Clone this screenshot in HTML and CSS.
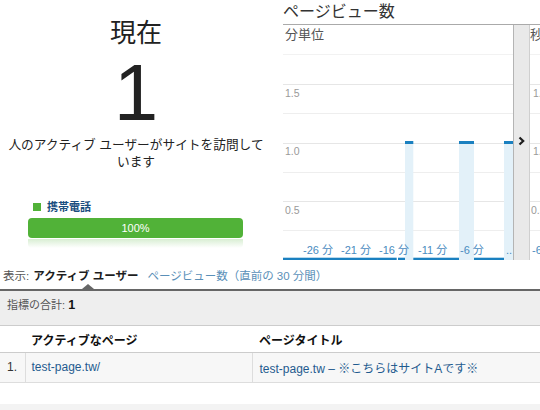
FILE: index.html
```html
<!DOCTYPE html>
<html lang="ja">
<head>
<meta charset="utf-8">
<title>リアルタイム</title>
<link rel="stylesheet" href="styles.css">
</head>
<body>
<div class="top">
  <div class="now">
    <div class="now-title">現在</div>
    <div class="now-count">1</div>
    <div class="now-desc">人のアクティブ ユーザーがサイトを訪問して<br>います</div>
    <div class="device">
      <div class="legend"><span class="swatch"></span>携帯電話</div>
      <div class="bar">100%</div>
      <div class="bar-reflect"></div>
    </div>
  </div>
  <div class="pv">
    <div class="pv-title">ページビュー数</div>
    <div class="pv-chart">
      <div class="plot plot-min">
        <div class="plot-label">分単位</div>
        <svg class="plot-svg" width="230" height="215" viewBox="0 0 230 215">
          <g stroke-width="1">
            <line x1="0" y1="9.5" x2="230" y2="9.5" stroke="#f2f2f2"/>
            <line x1="0" y1="39.5" x2="230" y2="39.5" stroke="#e6e6e6"/>
            <line x1="0" y1="68.5" x2="230" y2="68.5" stroke="#eeeeee"/>
            <line x1="0" y1="98.5" x2="230" y2="98.5" stroke="#e6e6e6"/>
            <line x1="0" y1="127.5" x2="230" y2="127.5" stroke="#eeeeee"/>
            <line x1="0" y1="156.5" x2="230" y2="156.5" stroke="#e6e6e6"/>
            <line x1="0" y1="185.5" x2="230" y2="185.5" stroke="#eeeeee"/>
          </g>
          <g fill="#e3f1f9">
            <rect x="122" y="99" width="8.3" height="116"/>
            <rect x="176" y="99" width="15" height="116"/>
            <rect x="221" y="99" width="9" height="116"/>
          </g>
          <g fill="#1a80c0">
            <rect x="122" y="96" width="8.3" height="3"/>
            <rect x="176" y="96" width="15" height="3"/>
            <rect x="221" y="96" width="9" height="3"/>
            <rect x="0" y="212.7" width="113.7" height="2.3"/>
            <rect x="115" y="212.7" width="7" height="2.3"/>
            <rect x="130.3" y="212.7" width="45.7" height="2.3"/>
            <rect x="191" y="212.7" width="30" height="2.3"/>
          </g>
          <g class="y-label">
            <text x="2" y="51.5">1.5</text>
            <text x="2" y="109.5">1.0</text>
            <text x="2" y="168.8">0.5</text>
          </g>
          <g class="x-label">
            <text x="20" y="209">-26 分</text>
            <text x="58" y="209">-21 分</text>
            <text x="96" y="209">-16 分</text>
            <text x="135" y="209">-11 分</text>
            <text x="177" y="209">-6 分</text>
            <text x="223" y="209">..</text>
          </g>
        </svg>
      </div>
      <div class="scroller">
        <svg class="chevron" width="7" height="10" viewBox="0 0 7 10">
          <polyline points="1.5,1.5 5.2,5 1.5,8.5" fill="none" stroke="#1e1e1e" stroke-width="2.2"/>
        </svg>
      </div>
      <div class="plot plot-sec">
        <div class="plot-label">秒</div>
        <svg class="plot-svg" width="10" height="215" viewBox="0 0 10 215">
          <g stroke-width="1">
            <line x1="0" y1="9.5" x2="10" y2="9.5" stroke="#f2f2f2"/>
            <line x1="0" y1="39.5" x2="10" y2="39.5" stroke="#e6e6e6"/>
            <line x1="0" y1="68.5" x2="10" y2="68.5" stroke="#eeeeee"/>
            <line x1="0" y1="98.5" x2="10" y2="98.5" stroke="#e6e6e6"/>
            <line x1="0" y1="127.5" x2="10" y2="127.5" stroke="#eeeeee"/>
            <line x1="0" y1="156.5" x2="10" y2="156.5" stroke="#e6e6e6"/>
            <line x1="0" y1="185.5" x2="10" y2="185.5" stroke="#eeeeee"/>
          </g>
          <g class="y-label">
            <text x="3" y="51.5">1.5</text>
            <text x="3" y="109.5">1.0</text>
            <text x="1" y="168.8">0.5</text>
          </g>
          <g class="x-label">
            <text x="2" y="209">-60 秒</text>
          </g>
        </svg>
      </div>
    </div>
  </div>
</div>

<div class="tabs">
  <span class="tab-caption">表示:</span>
  <span class="tab tab-active">アクティブ ユーザー</span>
  <span class="tab tab-link">ページビュー数（直前の 30 分間）</span>
</div>

<div class="summary">指標の合計: <b class="summary-value">1</b></div>

<table class="pages">
  <thead>
    <tr>
      <th class="col-num"></th>
      <th class="col-page">アクティブなページ</th>
      <th class="col-title">ページタイトル</th>
    </tr>
  </thead>
  <tbody>
    <tr>
      <td class="col-num">1.</td>
      <td class="col-page"><span class="link">test-page.tw/</span></td>
      <td class="col-title"><span class="link">test-page.tw – ※こちらはサイトAです※</span></td>
    </tr>
  </tbody>
</table>
<div class="footer-band"></div>
</body>
</html>
```

FILE: styles.css
```css
* {
  box-sizing: border-box;
}

html, body {
  margin: 0;
  padding: 0;
  background: #ffffff;
}

body {
  width: 540px;
  height: 410px;
  overflow: hidden;
  font-family: "Liberation Sans", "Noto Sans CJK JP", sans-serif;
  color: #222222;
}

.top {
  display: flex;
  gap: 11px;
  height: 260px;
}

/* left: current users */
.now {
  width: 272px;
  flex: none;
  text-align: center;
}

.now-title {
  margin-top: 18px;
  font-size: 26px;
  line-height: 30px;
  color: #222222;
}

.now-count {
  margin-top: 5px;
  font-size: 80px;
  line-height: 80px;
  color: #222222;
}

.now-desc {
  margin-top: 4px;
  font-size: 12.7px;
  line-height: 17px;
  white-space: nowrap;
  color: #222222;
}

.device {
  margin-top: 29px;
  padding-left: 28px;
  text-align: left;
}

.legend {
  display: flex;
  align-items: center;
  gap: 6px;
  padding-left: 5px;
  font-size: 11px;
  line-height: 14px;
  font-weight: bold;
  color: #1a4e80;
}

.swatch {
  width: 8px;
  height: 8px;
  background: #51b238;
}

.bar {
  margin-top: 4px;
  width: 215px;
  height: 20px;
  line-height: 20px;
  border-radius: 4px;
  background: #51b238;
  color: #ffffff;
  font-size: 11px;
  text-align: center;
}

.bar-reflect {
  margin-top: 1px;
  width: 215px;
  height: 9px;
  border-radius: 0 0 4px 4px;
  background: linear-gradient(rgba(81, 178, 56, 0.22), rgba(81, 178, 56, 0));
}

/* right: page view chart */
.pv {
  flex: 1;
  min-width: 0;
}

.pv-title {
  margin-top: 2px;
  margin-bottom: 2px;
  font-size: 16px;
  line-height: 20px;
  color: #333333;
  white-space: nowrap;
}

.pv-chart {
  display: flex;
  border-top: 1px solid #aaaaaa;
  height: 236px;
}

.plot {
  overflow: hidden;
}

.plot-min {
  width: 230px;
  flex: none;
}

.plot-sec {
  flex: 1;
  min-width: 0;
}

.plot-label {
  height: 20px;
  line-height: 20px;
  font-size: 13px;
  color: #555555;
  white-space: nowrap;
}

.plot-min .plot-label {
  padding-left: 2px;
}

.plot-svg {
  display: block;
}

.y-label {
  font-family: "Liberation Sans", sans-serif;
  font-size: 10.5px;
  fill: #9a9a9a;
}

.x-label {
  font-family: "Liberation Sans", "Noto Sans CJK JP", sans-serif;
  font-size: 11px;
  fill: #4a8bc0;
}

.scroller {
  width: 17px;
  flex: none;
  background: #e9e9e9;
  border-left: 1px solid #b4b4b4;
  border-right: 1px solid #cfcfcf;
  padding-top: 111px;
  padding-left: 4px;
}

.chevron {
  display: block;
}

/* tabs */
.tabs {
  position: relative;
  display: flex;
  align-items: center;
  gap: 4px;
  height: 31px;
  padding: 9px 0 6px 3px;
  border-bottom: 2px solid #666666;
  font-size: 11.5px;
  line-height: 16px;
  white-space: nowrap;
}

.tabs::after {
  content: "";
  position: absolute;
  left: 82px;
  bottom: 0;
  border-left: 6px solid transparent;
  border-right: 6px solid transparent;
  border-bottom: 5px solid #666666;
}

.tab-caption {
  color: #555555;
}

.tab-active {
  font-weight: bold;
  color: #1e1e1e;
}

.tab-link {
  margin-left: 5px;
  color: #5a8fb8;
}

/* summary */
.summary {
  height: 35px;
  padding: 6px 0 0 7px;
  background: #eeeeee;
  border-bottom: 1px solid #cccccc;
  font-size: 11px;
  line-height: 16px;
  color: #555555;
}

.summary-value {
  font-size: 12.5px;
  color: #111111;
}

/* table */
.pages {
  width: 540px;
  border-collapse: collapse;
  table-layout: fixed;
  font-size: 12px;
}

.pages th {
  height: 26px;
  padding: 2px 0 0 0;
  text-align: left;
  font-weight: bold;
  color: #111111;
  border-bottom: 1px solid #cccccc;
  white-space: nowrap;
}

.pages td {
  height: 30px;
  padding: 0;
  background: #f7f7f7;
  border-bottom: 1px solid #dddddd;
  color: #333333;
  white-space: nowrap;
}

.pages td + td {
  border-left: 1px solid #dddddd;
}

.col-num {
  width: 25px;
  padding-left: 7px !important;
}

.col-page {
  width: 227px;
  padding-left: 6px !important;
}

.col-title {
  padding-left: 7px !important;
}

.link {
  color: #1f5b8f;
}

.footer-band {
  margin-top: 21px;
  height: 10px;
  background: #f3f3f3;
}
```
